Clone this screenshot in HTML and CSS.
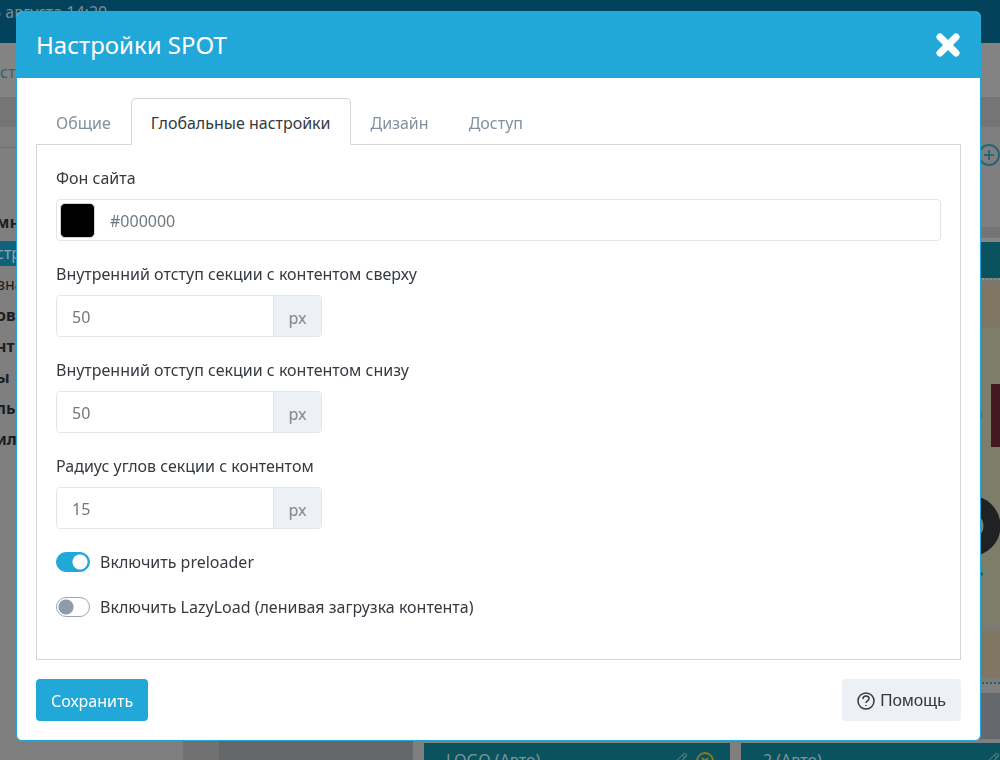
FILE: index.html
```html
<!DOCTYPE html>
<html lang="ru">
<head>
<meta charset="utf-8">
<meta name="viewport" content="width=device-width, initial-scale=1">
<title>Настройки SPOT</title>
<link rel="stylesheet" href="styles.css">
</head>
<body>
<div class="page" aria-hidden="true">
  <div class="topbar"><span class="topbar-date">5 августа 14:20</span></div>
  <div class="navbar"><span>ст</span></div>
  <div class="strip"></div>
  <div class="workspace">
    <div class="sidebar">
      <div class="sidebar-head"></div>
      <ul class="tree">
        <li class="strong">мн</li>
        <li class="active">стр</li>
        <li>вна</li>
        <li class="strong">ов</li>
        <li class="strong">нт</li>
        <li class="strong">ы</li>
        <li class="strong">ль</li>
        <li class="strong">ил</li>
      </ul>
    </div>
    <div class="gutter"></div>
    <div class="canvas">
      <div class="canvas-tools">
        <svg class="add-icon" viewBox="0 0 22 22"><circle cx="11" cy="11" r="10"/><path d="M11 6v10M6 11h10"/></svg>
      </div>
      <div class="canvas-gap"></div>
      <div class="block-title"></div>
      <div class="block-edge"></div>
      <div class="tan"></div>
      <div class="preview">
        <svg class="art" viewBox="0 0 60 298"><rect class="cover" x="51" y="56" width="9" height="63"/><circle class="vinyl" cx="30" cy="198" r="22"/><circle class="dot" cx="41" cy="246" r="2"/><path class="mark" d="M40 82q4 5 0 10"/></svg>
      </div>
      <div class="tan low"></div>
      <div class="dots"></div>
      <div class="slab"></div>
      <div class="blocks">
        <div class="empty"></div>
        <div class="block">
          <span>LOGO (Авто)</span>
          <span class="block-icons">
            <svg class="pen" viewBox="0 0 16 16"><path d="M2 14l1-4 8-8q2-1 3 1t-1 3l-8 7zM10 4l3 3"/></svg>
            <svg class="off" viewBox="0 0 18 18"><circle cx="9" cy="9" r="8"/><path d="M6 6l6 6M12 6l-6 6"/></svg>
          </span>
        </div>
        <div class="block last">
          <span>2 (Авто)</span>
          <span class="block-icons"><svg class="pen" viewBox="0 0 16 16"><path d="M2 14l1-4 8-8q2-1 3 1t-1 3l-8 7zM10 4l3 3"/></svg></span>
        </div>
      </div>
    </div>
  </div>
</div>

<div class="overlay">
  <section class="modal" role="dialog" aria-modal="true" aria-labelledby="modal-title">
    <header class="modal-header">
      <h1 class="modal-title" id="modal-title">Настройки SPOT</h1>
      <button class="close" type="button" aria-label="Закрыть">
        <svg viewBox="0 0 26 26"><path d="M5 5l16 16M21 5L5 21"/></svg>
      </button>
    </header>
    <form class="modal-body">
      <nav class="tabs">
        <a class="tab" href="#general">Общие</a>
        <a class="tab current" href="#global" aria-current="page">Глобальные настройки</a>
        <a class="tab" href="#design">Дизайн</a>
        <a class="tab" href="#access">Доступ</a>
      </nav>
      <div class="panel" id="global">
        <div class="field">
          <label for="bg">Фон сайта</label>
          <div class="color-box">
            <button class="swatch" type="button" aria-label="Выбрать цвет"></button>
            <input class="color-input" id="bg" type="text" value="#000000">
          </div>
        </div>
        <div class="field">
          <label for="top">Внутренний отступ секции с контентом сверху</label>
          <div class="group"><input id="top" type="text" value="50"><span class="unit">px</span></div>
        </div>
        <div class="field">
          <label for="bottom">Внутренний отступ секции с контентом снизу</label>
          <div class="group"><input id="bottom" type="text" value="50"><span class="unit">px</span></div>
        </div>
        <div class="field">
          <label for="radius">Радиус углов секции с контентом</label>
          <div class="group"><input id="radius" type="text" value="15"><span class="unit">px</span></div>
        </div>
        <div class="check">
          <input class="switch" id="preloader" type="checkbox" checked>
          <label for="preloader">Включить preloader</label>
        </div>
        <div class="check">
          <input class="switch" id="lazy" type="checkbox">
          <label for="lazy">Включить LazyLoad (ленивая загрузка контента)</label>
        </div>
      </div>
      <footer class="actions">
        <button class="btn primary" type="button">Сохранить</button>
        <button class="btn help" type="button">
          <svg viewBox="0 0 18 18"><circle cx="9" cy="9" r="8"/><path d="M6 7q0-3 3-3t3 2.500q0 1.500-1.500 2.300T9 11"/><path d="M9 13v1"/></svg>
          Помощь
        </button>
      </footer>
    </form>
  </section>
</div>
</body>
</html>
```
FILE: styles.css
```css
* { box-sizing: border-box; }

body {
  margin: 0;
  font-family: "Noto Sans", "Open Sans", sans-serif;
  font-size: 16px;
  line-height: 24px;
  color: #343a40;
}

button, input { font: inherit; }
svg { display: block; fill: none; stroke: currentColor; }

/* Dimmed page under the dialog */
.page {
  position: fixed;
  inset: 0;
  display: flex;
  flex-direction: column;
  overflow: hidden;
  background: #7f7f7f;
  color: #1c1f22;
}
.topbar {
  flex: 0 0 43px;
  background: #02425b;
  color: #7b8d95;
}
.topbar-date { margin-left: -8px; }
.navbar {
  flex: 0 0 54px;
  padding-top: 17px;
  background: #838383;
  color: #2d6773;
}
.strip { flex: 0 0 30px; background: #757575; }
.workspace { flex: 1; display: flex; min-height: 0; }
.sidebar { flex: 0 0 183px; }
.sidebar-head { height: 21px; border-bottom: 1px solid #6d6d6d; }
.tree {
  margin: 0;
  padding: 62px 0 0;
  list-style: none;
}
.tree li { height: 25px; margin-bottom: 6px; line-height: 25px; text-indent: -4px; }
.tree .strong { font-weight: 700; }
.tree .active { background: #10617a; color: #8fa5ad; }
.gutter { flex: 0 0 36px; background: #717171; }
.canvas { flex: 1; display: flex; flex-direction: column; min-width: 0; }
.canvas-tools {
  flex: 0 0 100px;
  display: flex;
  justify-content: flex-end;
  padding-top: 17px;
}
.add-icon { width: 22px; height: 22px; color: #286577; stroke-width: 2; }
.canvas-gap { flex: 0 0 15px; background: #757575; border-bottom: 4px solid #858585; }
.block-title { flex: 0 0 36px; background: #0a525d; }
.block-edge { flex: 0 0 5px; border-top: 2px dotted #83918d; background: #78796f; }
.tan { flex: 0 0 45px; background: #7f7763; }
.preview {
  flex: 0 0 302px;
  display: flex;
  justify-content: flex-end;
  background: #7d7e69;
  border-bottom: 4px solid #7c7a78;
}
.art { width: 60px; height: 298px; stroke: none; }
.cover { fill: #43191f; }
.vinyl { stroke: #202122; stroke-width: 17; }
.dot { fill: #14607a; }
.mark { stroke: #51666a; }
.tan.low { flex-basis: 48px; }
.dots { flex: 0 0 15px; border-top: 4px solid #7c7c78; }
.dots::after { content: ""; display: block; border-top: 2px dotted #315e6b; }
.slab { flex: 0 0 46px; background: #65696d; }
.blocks { flex: 1; display: flex; gap: 11px; }
.empty { flex: 0 0 194px; background: #64686b; }
.block {
  flex: 0 0 306px;
  display: flex;
  justify-content: space-between;
  margin-top: 4px;
  padding: 5px 16px 0 22px;
  background: #0a525d;
  color: #7e9498;
}
.block.last { flex: 1; padding-right: 0; }
.block-icons { display: flex; gap: 8px; padding-top: 4px; }
.pen { width: 14px; height: 14px; }
.off { width: 18px; height: 18px; color: #84792e; stroke-width: 2; }

/* Dialog */
.overlay {
  position: relative;
  display: flex;
  min-height: 100vh;
  padding: 11px 19px 19px 16px;
}
.modal {
  flex: 1;
  display: flex;
  flex-direction: column;
  border: 1px solid #22a7d9;
  border-radius: 6px;
  background: #fff;
  overflow: hidden;
}
.modal-header {
  display: flex;
  align-items: center;
  justify-content: space-between;
  height: 66px;
  padding: 0 19px;
  background: #22a7d9;
  color: #fff;
}
.modal-title { margin: 0; font-size: 24px; line-height: 32px; font-weight: 400; }
.close {
  padding: 0;
  border: 0;
  background: none;
  color: inherit;
  cursor: pointer;
}
.close svg { width: 26px; height: 26px; stroke-width: 7; stroke-linecap: round; }
.modal-body { flex: 1; display: flex; flex-direction: column; padding: 20px 19px 19px; }
.tabs { display: flex; margin-bottom: -1px; }
.tab {
  padding: 12px 19px 9px;
  border: 1px solid transparent;
  color: #8390a0;
  text-decoration: none;
}
.tab.current {
  position: relative;
  border-color: #d3d5d7;
  border-bottom-color: #fff;
  border-radius: 5px 5px 0 0;
  background: #fff;
  color: #343a40;
}
.panel { flex: 1; padding: 21px 19px 10px; border: 1px solid #d3d5d7; }
.field { margin-bottom: 21px; }
.field label { display: block; margin-bottom: 9px; }
.color-box, .group {
  display: flex;
  height: 42px;
  border: 1px solid #e3e6e9;
  border-radius: 4px;
  overflow: hidden;
}
.color-box { align-items: center; padding-left: 3px; }
.swatch {
  width: 35px;
  height: 35px;
  padding: 0;
  border: 1px solid #ced4da;
  border-radius: 5px;
  background: #000;
}
.color-box input, .group input {
  flex: 1;
  min-width: 0;
  padding: 2px 15px 0;
  border: 0;
  background: #fff;
  color: #707980;
}
.group { width: 266px; }
.unit {
  display: flex;
  align-items: center;
  justify-content: center;
  width: 48px;
  padding-top: 3px;
  border-left: 1px solid #e3e6e9;
  background: #edf1f5;
  color: #7d8894;
}
.check { display: flex; align-items: center; gap: 10px; margin-bottom: 21px; }
.switch {
  appearance: none;
  width: 34px;
  height: 20px;
  margin: 0;
  border: 1px solid #9ba5af;
  border-radius: 10px;
  background: radial-gradient(circle at 9px 9px, #8f9ba8 7px, transparent 8px) #fff;
}
.switch:checked {
  border-color: #22a7d9;
  background: radial-gradient(circle at 23px 9px, #fff 7px, transparent 8px) #22a7d9;
}
.actions { display: flex; justify-content: space-between; margin-top: 19px; }
.btn {
  display: flex;
  align-items: center;
  gap: 5px;
  height: 42px;
  padding: 2px 15px 0;
  border: 0;
  border-radius: 4px;
  cursor: pointer;
}
.primary { background: #22a7d9; color: #fff; }
.help { background: #edf1f5; color: #343a40; font-family: "Liberation Sans", Arial, sans-serif; font-size: 17px; }
.help svg { width: 18px; height: 18px; stroke-width: 1.5; }
```
